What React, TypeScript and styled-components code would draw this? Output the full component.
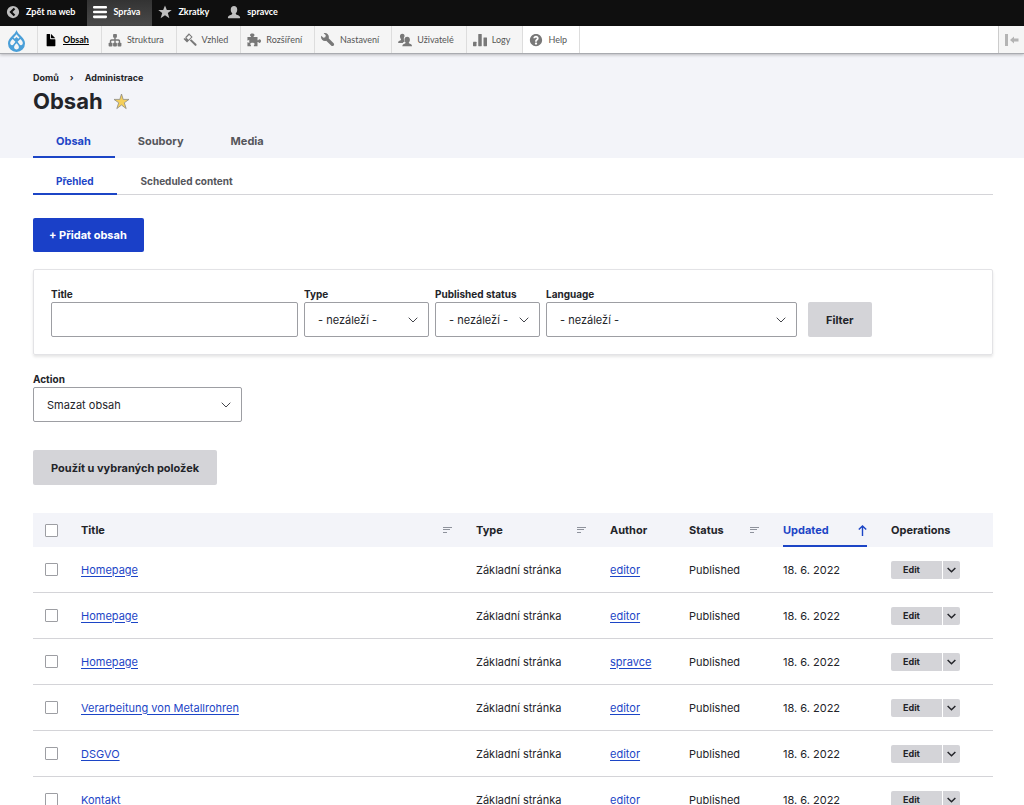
import React from "react";
import styled, { createGlobalStyle } from "styled-components";

const GlobalStyle = createGlobalStyle`
  *, *::before, *::after { box-sizing: border-box; }
  body {
    margin: 0;
    background: #fff;
    color: #232429;
    font: 11px/16px Inter, "Noto Sans", sans-serif;
    overflow-x: hidden;
  }
  button, input, select { font: inherit; color: inherit; }
  a { color: #003ecc; }
`;

const toolbarFont = `Lato, "Noto Sans", sans-serif`;

/* Toolbar */

const Bar = styled.nav`
  display: flex;
  height: 26px;
  background: #0f0f0f;
  font: 700 9px/24px ${toolbarFont};
`;

const BarTab = styled.a<{ $active?: boolean }>`
  display: flex;
  align-items: center;
  gap: 6px;
  padding: 0 12px 2px 6px;
  color: #fff;
  text-decoration: none;
  background: ${(p) => (p.$active ? "linear-gradient(#333, #4a4a4a)" : "none")};
  svg { width: 14px; height: 14px; fill: ${(p) => (p.$active ? "#fff" : "#bebebe")}; }
`;

const Tray = styled.nav`
  display: flex;
  height: 28px;
  background: #fff;
  border-bottom: 1px solid #a9abb0;
  box-shadow: 0 1px 3px rgba(0, 0, 0, 0.25);
  position: relative;
  font: 400 9px/26px ${toolbarFont};
`;

const TrayLogo = styled.a`
  display: flex;
  align-items: center;
  padding: 2px 11px 0 7px;
  background: #f5f5f5;
  border-right: 1px solid #ddd;
  svg { width: 19px; height: 22px; }
`;

const TrayItem = styled.a<{ $active?: boolean; $plain?: boolean }>`
  display: flex;
  align-items: center;
  gap: 5px;
  padding: 0 12px 0 6px;
  color: ${(p) => (p.$active ? "#000" : "#565656")};
  font-weight: ${(p) => (p.$active ? 700 : 400)};
  text-decoration: none;
  background: ${(p) => (p.$plain ? "#fff" : "#f5f5f5")};
  border-right: 1px solid #ddd;
  svg { width: 14px; height: 14px; fill: ${(p) => (p.$active ? "#000" : "#787878")}; }
  span { text-decoration: ${(p) => (p.$active ? "underline" : "none")}; }
`;

const TrayToggle = styled.button`
  display: flex;
  align-items: center;
  justify-content: center;
  width: 26px;
  margin-left: auto;
  padding: 0;
  border: 0;
  border-left: 1px solid #ccc;
  background: #f5f5f5;
  svg { width: 14px; height: 12px; fill: #b4b4b4; }
`;

/* Page header */

const PageHeader = styled.header`
  padding: 16px 31px 0 33px;
  background: #f3f4f9;
`;

const Breadcrumb = styled.nav`
  display: flex;
  gap: 11px;
  font-size: 9px;
  font-weight: 700;
  line-height: 16px;
  a { color: #232429; text-decoration: none; }
`;

const TitleRow = styled.div`
  display: flex;
  align-items: center;
  gap: 10px;
  margin-bottom: 9px;
  svg { width: 17px; height: 17px; }
`;

const PageTitle = styled.h1`
  margin: 0;
  font-size: 22px;
  line-height: 31px;
  font-weight: 700;
`;

const Tabs = styled.nav<{ $secondary?: boolean }>`
  display: flex;
  border-bottom: ${(p) => (p.$secondary ? "1px solid #d4d4d8" : "0")};
`;

const Tab = styled.a<{ $active?: boolean; $secondary?: boolean }>`
  padding: 0 24px 0 23px;
  height: ${(p) => (p.$secondary ? 26 : 32)}px;
  margin-bottom: ${(p) => (p.$secondary ? -1 : 0)}px;
  border-bottom: 2px solid ${(p) => (p.$active ? "#1c45c6" : "transparent")};
  color: ${(p) => (p.$active ? "#1c45c6" : "#55565b")};
  font-size: ${(p) => (p.$secondary ? 10 : 11)}px;
  line-height: ${(p) => (p.$secondary ? 24 : 30)}px;
  font-weight: 700;
  text-decoration: none;
`;

/* Content */

const Main = styled.main`
  padding: 11px 31px 0 33px;
`;

const AddLink = styled.a`
  display: inline-block;
  margin: 23px 0 17px;
  padding: 0 17px 0 16px;
  border-radius: 2px;
  background: #1a40c8;
  color: #fff;
  font-weight: 700;
  line-height: 34px;
  text-decoration: none;
`;

const FilterPanel = styled.form`
  display: flex;
  align-items: flex-end;
  gap: 6px;
  padding: 16px 17px 17px;
  border: 1px solid #e3e3e6;
  border-radius: 2px;
  box-shadow: 0 2px 3px rgba(0, 0, 0, 0.1);
`;

const Field = styled.div<{ $width: number }>`
  width: ${(p) => p.$width}px;
`;

const Label = styled.label`
  display: block;
  font-size: 10px;
  line-height: 16px;
  font-weight: 700;
`;

const TextInput = styled.input`
  display: block;
  width: 100%;
  height: 35px;
  padding: 0 14px;
  border: 1px solid #9d9ea3;
  border-radius: 2px;
  background: #fff;
`;

const SelectBox = styled.div`
  display: grid;
  align-items: center;
  > * { grid-area: 1 / 1; }
  svg { justify-self: end; width: 10px; height: 6px; margin-right: 11px; pointer-events: none; }
`;

const Select = styled.select`
  appearance: none;
  width: 100%;
  height: 35px;
  padding: 0 13px;
  border: 1px solid #9d9ea3;
  border-radius: 2px;
  background: #fff;
`;

const Button = styled.button`
  height: 35px;
  padding: 0 18px;
  border: 0;
  border-radius: 2px;
  background: #d4d4d8;
  font-weight: 700;
`;

const FilterButton = styled(Button)`
  margin-left: 5px;
`;

const Bulk = styled.form`
  display: flex;
  flex-direction: column;
  align-items: flex-start;
  gap: 28px;
  margin: 16px 0 28px;
`;

/* Table */

const Table = styled.table`
  width: 100%;
  table-layout: fixed;
  border-collapse: separate;
  border-spacing: 0;
`;

const Col = styled.col<{ $width?: number }>`
  width: ${(p) => (p.$width ? `${p.$width}px` : "auto")};
`;

const Th = styled.th`
  height: 34px;
  padding: 0 12px;
  background: #f3f4f9;
  text-align: left;
  font-weight: 700;
`;

const SortLink = styled.a<{ $active?: boolean }>`
  display: flex;
  align-items: center;
  justify-content: space-between;
  height: 34px;
  border-bottom: 2px solid ${(p) => (p.$active ? "#1c45c6" : "transparent")};
  border-top: 2px solid transparent;
  color: ${(p) => (p.$active ? "#1c45c6" : "#232429")};
  text-decoration: none;
`;

const Td = styled.td`
  height: 46px;
  padding: 0 12px;
  border-bottom: 1px solid #d4d4d8;
  a { color: #1c45c6; text-underline-offset: 2px; }
`;

const Checkbox = styled.input`
  appearance: none;
  display: block;
  width: 13px;
  height: 13px;
  margin: 0;
  border: 1px solid #9d9ea3;
  border-radius: 1px;
  background: #fff;
`;

const SplitButton = styled.div`
  display: flex;
  gap: 1px;
  width: 69px;
  height: 18px;
`;

const EditButton = styled.button`
  flex: 1;
  padding: 0 0 0 12px;
  border: 0;
  border-radius: 2px 0 0 2px;
  background: #d4d4d8;
  font-size: 9px;
  font-weight: 700;
  line-height: 18px;
  text-align: left;
`;

const MoreButton = styled.button`
  display: flex;
  align-items: center;
  justify-content: center;
  width: 17px;
  padding: 0;
  border: 0;
  border-radius: 0 2px 2px 0;
  background: #d4d4d8;
  svg { width: 9px; height: 6px; }
`;

/* Icons */

const Chevron = ({ width = 1, color = "#45464c" }: { width?: number; color?: string }) => (
  <svg viewBox="0 0 10 6" fill="none" stroke={color} strokeWidth={width}>
    <path d="M.7.7 5 5 9.3.7" />
  </svg>
);

const SortIcon = () => (
  <svg width="9" height="6" viewBox="0 0 9 6" fill="#8e929c">
    <path d="M0 0h9v1H0zM0 2h7v1H0zM0 5h4v1H0z" />
  </svg>
);

const SortUpIcon = () => (
  <svg width="9" height="11" viewBox="0 0 9 11" fill="none" stroke="#1c45c6" strokeWidth="1.4">
    <path d="M4.5 11V1M.8 4.6 4.5 1l3.7 3.6" />
  </svg>
);

const BackIcon = () => (
  <svg viewBox="0 0 16 16">
    <path fillRule="evenodd" d="M8 1a7 7 0 1 0 0 14A7 7 0 0 0 8 1zm2.6 10.2-1.8 1.7L3.9 8l4.9-4.9 1.8 1.7L7.4 8z" />
  </svg>
);

const MenuIcon = () => (
  <svg viewBox="0 0 16 16">
    <rect y="1" width="16" height="3" rx="1.2" />
    <rect y="6.5" width="16" height="3" rx="1.2" />
    <rect y="12" width="16" height="3" rx="1.2" />
  </svg>
);

const StarIcon = () => (
  <svg viewBox="0 0 16 16">
    <path d="M8 .5l2.100 5.100h5.600l-4.500 3.500 1.800 5.900L8 11.600l-5 3.400 1.800-5.900L.3 5.600h5.600z" />
  </svg>
);

const UserIcon = () => (
  <svg viewBox="0 0 16 16">
    <path d="M1.500 15c-.3 0-.5-.2-.5-.5 0-2 1.200-2.700 4-3.500.9-.3 1.200-.8.9-1.500C4.900 8.300 4.300 6.900 4.300 5 4.300 2.400 5.800 1 8 1s3.700 1.400 3.700 4c0 1.900-.6 3.300-1.600 4.500-.3.700 0 1.200.9 1.500 2.800.8 4 1.500 4 3.500 0 .3-.2.5-.5.5z" />
  </svg>
);

const DrupalIcon = () => (
  <svg viewBox="0 0 19 22">
    <path
      fill="#4a9fd8"
      d="M9.500 0c-.8 2.700-2.800 4.300-4.700 6.200C2.400 8.500 1 10.500 1 13.500a8.500 8.500 0 0 0 17 0c0-3-1.400-5-3.800-7.300C12.300 4.300 10.300 2.700 9.500 0z"
    />
    <g fill="#f5f5f5">
      <path d="M9.500 4.200c.9 1.300 2 2.300 3 3.300l-1.200 1.300L9.500 7 7.700 8.800 6.500 7.500c1-1 2.100-2 3-3.300z" />
      <path d="M5.700 8.900l2.700 2.800c-1.300 1.500-2 3.500-3.400 3.500-1.100 0-1.800-.9-1.800-2.200 0-1.500 1-2.700 2.500-4.100z" />
      <path d="M13.300 8.900l-2.700 2.800c1.300 1.500 2 3.500 3.400 3.500 1.100 0 1.800-.9 1.800-2.200 0-1.500-1-2.700-2.500-4.100z" />
      <path d="M9.500 13.300c1.500 1.500 2.400 2.500 2.400 4 0 1.300-1.100 2.200-2.400 2.200s-2.400-.9-2.400-2.200c0-1.500.9-2.500 2.400-4z" />
    </g>
  </svg>
);

const FileIcon = () => (
  <svg viewBox="0 0 16 16">
    <path d="M12.502 7h-5c-.276 0-.502-.225-.502-.5v-5c0-.275-.225-.5-.5-.5h-3c-.276 0-.5.225-.5.5v13.029c0 .275.225.5.5.5h9.002c.275 0 .5-.225.5-.5v-7.029c-.002-.276-.225-.5-.5-.5zM8.502 6h4c.275 0 .34-.159.146-.354l-4.293-4.292c-.195-.195-.353-.129-.353.146v4c-.001.275.225.5.5.5z" />
  </svg>
);

const StructureIcon = () => (
  <svg viewBox="0 0 16 16">
    <rect x="5.800" y="1" width="4.400" height="4.400" rx="1" />
    <path d="M7.200 4.500h1.600v2.700h3.100c1.200 0 2 .8 2 2v2.500h-1.600V9.400c0-.4-.2-.6-.6-.6H8.800v3H7.200v-3H4.300c-.4 0-.6.2-.6.600v2.300H2.100V9.200c0-1.200.8-2 2-2h3z" />
    <rect x=".7" y="11" width="4.400" height="4.400" rx="1" />
    <rect x="5.800" y="11" width="4.400" height="4.400" rx="1" />
    <rect x="10.900" y="11" width="4.400" height="4.400" rx="1" />
  </svg>
);

const AppearanceIcon = () => (
  <svg viewBox="0 0 16 16">
    <path fillRule="evenodd" d="M6.800.3 11 4.500 4.600 10.900.6 6.800l1-1 .8.800.9-.9-.8-.8zM7 2.200 3.900 5.300l2.400 2.400L9.400 4.600z" />
    <path d="M7.800 8.600l1.600-1.600 5.800 5.700c.5.500.5 1.200 0 1.700s-1.200.5-1.700 0z" />
  </svg>
);

const ExtendIcon = () => (
  <svg viewBox="0 0 16 16">
    <path d="M.5 4.500h3.900v-.8c-.7-.4-1-.9-1-1.400C3.400 1.300 4.500.6 6 .6s2.600.7 2.600 1.700c0 .5-.3 1-1 1.400v.8H12v3.700h.9c.3-.7.8-1.100 1.400-1.100 1 0 1.700.9 1.700 2.100s-.7 2.100-1.700 2.100c-.6 0-1.100-.4-1.400-1.100H12V15H7.900v-1.200c.6-.3.900-.7.9-1.200 0-.9-1.100-1.600-2.600-1.600s-2.600.7-2.600 1.600c0 .5.300.9.900 1.200V15H.5V10.500h.8c.4.600.8.900 1.300.9V7.600c-.5 0-.9.300-1.300.9H.5z" />
  </svg>
);

const WrenchIcon = () => (
  <svg viewBox="0 0 16 16">
    <path d="M14.416 11.586l-.01-.008v-.001l-5.656-5.656c.15-.449.252-.921.252-1.421 0-2.485-2.016-4.500-4.502-4.500-.505 0-.981.102-1.434.255l2.431 2.431-.588 2.196-2.196.588-2.445-2.445c-.162.464-.268.956-.268 1.475 0 2.486 2.014 4.500 4.500 4.500.5 0 .972-.102 1.421-.251l5.667 5.665c.781.781 2.047.781 2.828 0s.781-2.047 0-2.828z" />
  </svg>
);

const PeopleIcon = () => (
  <svg viewBox="0 0 16 16">
    <path d="M6.600 10.400c.4-.4 1-.6 1.200-.8C6.900 8.400 6.500 7.200 6.700 5.600c.1-.9.400-1.500.9-2C7.400 1.700 6.400.8 5 .8 3.200.8 2.100 2.100 2.200 4c.1 1.400.5 2.400 1.200 3.200.3.500.1.900-.4 1.100C.9 9 .2 9.500.2 11v.3h5.300c.3-.4.700-.7 1.100-.9z" />
    <path d="M5 15.200c0-2 .9-2.500 3-3.200.7-.3.900-.7.600-1.200C7.800 9.900 7.400 9 7.400 7.500c0-2 1.200-3.300 3.100-3.300s3.100 1.300 3.100 3.300c0 1.500-.4 2.400-1.200 3.300-.3.500-.1.900.6 1.200 2.100.7 3 1.200 3 3.200z" />
  </svg>
);

const ChartIcon = () => (
  <svg viewBox="0 0 16 16">
    <rect y="10" width="4" height="5" rx=".5" />
    <rect x="6" y="1" width="4" height="14" rx=".5" />
    <rect x="12" y="5" width="4" height="10" rx=".5" />
  </svg>
);

const HelpIcon = () => (
  <svg viewBox="0 0 16 16">
    <path d="M8.002 1c-3.868 0-7.002 3.134-7.002 7s3.134 7 7.002 7c3.865 0 7-3.134 7-7s-3.135-7-7-7zm3 5c0 .551-.16 1.085-.477 1.586l-.158.22c-.07.093-.189.241-.361.393-.168.148-.35.299-.545.447l-.203.189-.141.129-.096.17-.021.235v.63h-2.001v-.704c.026-.396.078-.73.204-.999.125-.269.271-.498.439-.688l.225-.21-.01-.015.176-.14.137-.128c.186-.139.357-.277.516-.417l.148-.18c.098-.152.168-.323.168-.518 0-.552-.447-1-1-1s-1.002.448-1.002 1h-2c0-1.657 1.343-3 3.002-3 1.656 0 3 1.343 3 3zm-1.750 6.619c0 .344-.281.625-.625.625h-1.250c-.345 0-.626-.281-.626-.625v-1.238c0-.344.281-.625.626-.625h1.250c.344 0 .625.281.625.625v1.238z" />
  </svg>
);

const CollapseIcon = () => (
  <svg viewBox="0 0 14 12">
    <path d="M0 0h3v12H0zM5 6l4-3.500v2h4.500v3H9v2z" />
  </svg>
);

const ShortcutStar = () => (
  <svg viewBox="0 0 17 17">
    <path
      fill="#f5cf5a"
      stroke="#8d8a80"
      strokeWidth=".8"
      d="M8.500 1l1.700 5.400h5.800l-4.700 3.400 1.900 5.800-4.700-3.600-4.700 3.600 1.900-5.800L1 6.400h5.800z"
    />
  </svg>
);

const trayItems = [
  { label: "Obsah", icon: <FileIcon />, active: true },
  { label: "Struktura", icon: <StructureIcon /> },
  { label: "Vzhled", icon: <AppearanceIcon /> },
  { label: "Rozšíření", icon: <ExtendIcon /> },
  { label: "Nastavení", icon: <WrenchIcon /> },
  { label: "Uživatelé", icon: <PeopleIcon /> },
  { label: "Logy", icon: <ChartIcon /> },
  { label: "Help", icon: <HelpIcon />, plain: true },
];

const rows = [
  { title: "Homepage", author: "editor" },
  { title: "Homepage", author: "editor" },
  { title: "Homepage", author: "spravce" },
  { title: "Verarbeitung von Metallrohren", author: "editor" },
  { title: "DSGVO", author: "editor" },
  { title: "Kontakt", author: "editor" },
];

function SelectField({ id, label, option, width }: { id: string; label: string; option: string; width: number }) {
  return (
    <Field $width={width}>
      <Label htmlFor={id}>{label}</Label>
      <SelectBox>
        <Select id={id}>
          <option>{option}</option>
        </Select>
        <Chevron />
      </SelectBox>
    </Field>
  );
}

export default function App() {
  return (
    <>
      <GlobalStyle />
      <Bar>
        <BarTab href="#"><BackIcon />Zpět na web</BarTab>
        <BarTab href="#" $active><MenuIcon />Správa</BarTab>
        <BarTab href="#"><StarIcon />Zkratky</BarTab>
        <BarTab href="#"><UserIcon />spravce</BarTab>
      </Bar>
      <Tray>
        <TrayLogo href="#" aria-label="Drupal"><DrupalIcon /></TrayLogo>
        {trayItems.map((item) => (
          <TrayItem key={item.label} href="#" $active={item.active} $plain={item.plain}>
            {item.icon}
            <span>{item.label}</span>
          </TrayItem>
        ))}
        <TrayToggle aria-label="Vertical orientation"><CollapseIcon /></TrayToggle>
      </Tray>

      <PageHeader>
        <Breadcrumb>
          <a href="#">Domů</a>
          <span>›</span>
          <a href="#">Administrace</a>
        </Breadcrumb>
        <TitleRow>
          <PageTitle>Obsah</PageTitle>
          <ShortcutStar />
        </TitleRow>
        <Tabs>
          <Tab href="#" $active>Obsah</Tab>
          <Tab href="#">Soubory</Tab>
          <Tab href="#">Media</Tab>
        </Tabs>
      </PageHeader>

      <Main>
        <Tabs $secondary>
          <Tab href="#" $secondary $active>Přehled</Tab>
          <Tab href="#" $secondary>Scheduled content</Tab>
        </Tabs>

        <AddLink href="#">+ Přidat obsah</AddLink>

        <FilterPanel>
          <Field $width={247}>
            <Label htmlFor="title">Title</Label>
            <TextInput id="title" type="text" />
          </Field>
          <SelectField id="type" label="Type" option="- nezáleží -" width={125} />
          <SelectField id="status" label="Published status" option="- nezáleží -" width={105} />
          <SelectField id="language" label="Language" option="- nezáleží -" width={251} />
          <FilterButton type="button">Filter</FilterButton>
        </FilterPanel>

        <Bulk>
          <SelectField id="action" label="Action" option="Smazat obsah" width={209} />
          <Button type="button">Použít u vybraných položek</Button>
        </Bulk>

        <Table>
          <colgroup>
            <Col $width={36} />
            <Col />
            <Col $width={134} />
            <Col $width={79} />
            <Col $width={94} />
            <Col $width={108} />
            <Col $width={114} />
          </colgroup>
          <thead>
            <tr>
              <Th><Checkbox type="checkbox" aria-label="Select all rows" /></Th>
              <Th><SortLink href="#">Title<SortIcon /></SortLink></Th>
              <Th><SortLink href="#">Type<SortIcon /></SortLink></Th>
              <Th>Author</Th>
              <Th><SortLink href="#">Status<SortIcon /></SortLink></Th>
              <Th><SortLink href="#" $active>Updated<SortUpIcon /></SortLink></Th>
              <Th>Operations</Th>
            </tr>
          </thead>
          <tbody>
            {rows.map((row, i) => (
              <tr key={i}>
                <Td><Checkbox type="checkbox" aria-label={`Select ${row.title}`} /></Td>
                <Td><a href="#">{row.title}</a></Td>
                <Td>Základní stránka</Td>
                <Td><a href="#">{row.author}</a></Td>
                <Td>Published</Td>
                <Td>18. 6. 2022</Td>
                <Td>
                  <SplitButton>
                    <EditButton type="button">Edit</EditButton>
                    <MoreButton type="button" aria-label="More actions"><Chevron width={1.6} color="#232429" /></MoreButton>
                  </SplitButton>
                </Td>
              </tr>
            ))}
          </tbody>
        </Table>
      </Main>
    </>
  );
}
